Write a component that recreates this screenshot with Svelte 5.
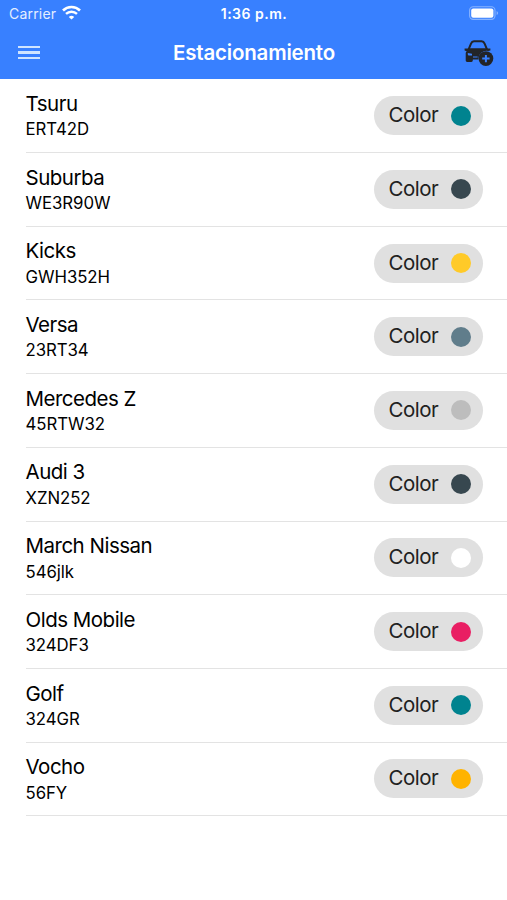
<script lang="ts">
	let cars = [
		{ name: "Tsuru", plate: "ERT42D", color: "#00838f" },
		{ name: "Suburba", plate: "WE3R90W", color: "#37474f" },
		{ name: "Kicks", plate: "GWH352H", color: "#ffca28" },
		{ name: "Versa", plate: "23RT34", color: "#607d8b" },
		{ name: "Mercedes Z", plate: "45RTW32", color: "#bdbdbd" },
		{ name: "Audi 3", plate: "XZN252", color: "#37474f" },
		{ name: "March Nissan", plate: "546jlk", color: "#ffffff" },
		{ name: "Olds Mobile", plate: "324DF3", color: "#e91e63" },
		{ name: "Golf", plate: "324GR", color: "#00838f" },
		{ name: "Vocho", plate: "56FY", color: "#ffb300" }
	];
</script>

<div class="app">
	<header>
		<div class="status">
			<div class="carrier">
				<span>Carrier</span>
				<svg width="19" height="15" viewBox="0 0 19 15">
					<path d="M1 5.4a12.3 12.3 0 0 1 17 0" fill="none" stroke="#fff" stroke-width="2.7" />
					<path d="M4 8.9a8 8 0 0 1 11 0" fill="none" stroke="#fff" stroke-width="2.4" />
					<path d="M6.8 11.9a4 4 0 0 1 5.4 0L9.5 14.6z" fill="#fff" />
				</svg>
			</div>
			<span class="time">1:36 p.m.</span>
			<svg class="battery" width="31" height="15" viewBox="0 0 31 15">
				<rect x="1.6" y="0.8" width="25.4" height="12.6" rx="3.6" fill="none" stroke="#fff" stroke-opacity=".4" stroke-width="1.1" />
				<rect x="3.2" y="2.4" width="22.2" height="9.4" rx="2" fill="#fff" />
				<path d="M28.6 4.9c2 .8 2 3.4 0 4.2z" fill="#fff" fill-opacity=".4" />
			</svg>
		</div>
		<div class="toolbar">
			<button class="menu" aria-label="Menu">
				<i></i>
				<i></i>
				<i></i>
			</button>
			<h1>Estacionamiento</h1>
			<button class="add" aria-label="Agregar">
				<svg width="30" height="28" viewBox="0 0 30 28">
					<path d="M4.6 10.4 7 4.6Q7.9 2.4 10 2.3h7.6q2.1.1 3 2.3L23 10.4" fill="none" stroke="#222428" stroke-width="2" />
					<path d="M.6 9.6h3.6l1-.4h17.2l1 .4h3v1.8l-2.3.5a8.3 8.3 0 0 0-9.7 8.5H8.8v1.2q0 1.4-1.4 1.4H3.1q-1.4 0-1.4-1.4v-7.3q0-1 1-2L.6 11.4z" fill="#222428" />
					<path d="M3.8 14 8 14.7v1.8H5q-1.2 0-1.2-1.2zM9 17.6h4.6v1H9z" fill="#3880ff" />
					<circle cx="21.9" cy="19.6" r="7.4" fill="#222428" />
					<path d="M21.9 15.9v7.4M18.2 19.6h7.4" stroke="#3880ff" stroke-width="2" />
				</svg>
			</button>
		</div>
	</header>

	<ul>
		{#each cars as car}
			<li>
				<div class="info">
					<h2>{car.name}</h2>
					<p>{car.plate}</p>
				</div>
				<div class="chip">
					<span>Color</span>
					<span class="dot" style="background-color: {car.color}"></span>
				</div>
			</li>
		{/each}
	</ul>
</div>

<style>
	:global(body) {
		background-color: #fff;
	}

	.app {
		min-height: 900px;
		font-family: Inter, "Liberation Sans", sans-serif;
		color: #000;
		overflow: hidden;
	}

	header {
		height: 79px;
		background-color: #3880ff;
		color: #fff;
	}

	.status {
		display: grid;
		grid-template-columns: 1fr auto 1fr;
		align-items: center;
		height: 27px;
		padding: 0 8px 0 9px;
		font-size: 14px;
	}

	.carrier {
		display: flex;
		align-items: center;
		gap: 6px;
		letter-spacing: .2px;
		color: #e4eeff;
	}

	.carrier svg {
		margin-top: -2px;
	}

	.time {
		font-weight: 600;
		letter-spacing: .5px;
	}

	.battery {
		justify-self: end;
	}

	.toolbar {
		display: grid;
		grid-template-columns: 1fr auto 1fr;
		align-items: center;
		height: 51px;
		padding: 0 13px 0 18px;
	}

	button {
		padding: 0;
		border: 0;
		background: none;
	}

	.menu {
		display: flex;
		flex-direction: column;
		gap: 3px;
		width: 22px;
	}

	.menu i {
		height: 2.4px;
		background-color: #cfe4ff;
	}

	h1 {
		margin: 0 4px 0 0;
		font-size: 20.5px;
		font-weight: 600;
		letter-spacing: -.2px;
	}

	.add {
		justify-self: end;
		height: 28px;
		margin-top: 1px;
	}

	.add svg {
		display: block;
	}

	ul {
		margin: 0;
		padding: .4px 0 0 25.5px;
		list-style: none;
	}

	li {
		display: flex;
		justify-content: space-between;
		align-items: center;
		box-sizing: border-box;
		height: 73.7px;
		padding-right: 24.5px;
		border-bottom: 1px solid #e3e3e3;
	}

	h2 {
		margin: 0 0 1.4px;
		font-size: 20.5px;
		line-height: 26px;
		font-weight: 400;
		letter-spacing: -.5px;
	}

	p {
		margin: 0;
		font-size: 16.8px;
		line-height: 22px;
		letter-spacing: -.05px;
	}

	.chip {
		display: flex;
		align-items: center;
		justify-content: space-between;
		box-sizing: border-box;
		width: 109px;
		height: 39px;
		padding: 0 12px 0 15px;
		border-radius: 20px;
		background-color: #e0e0e0;
		color: #212121;
		font-size: 20.5px;
		line-height: 24px;
		letter-spacing: -.5px;
	}

	.chip span:first-child {
		margin-bottom: 1px;
	}

	.dot {
		width: 20px;
		height: 20px;
		border-radius: 50%;
	}
</style>
